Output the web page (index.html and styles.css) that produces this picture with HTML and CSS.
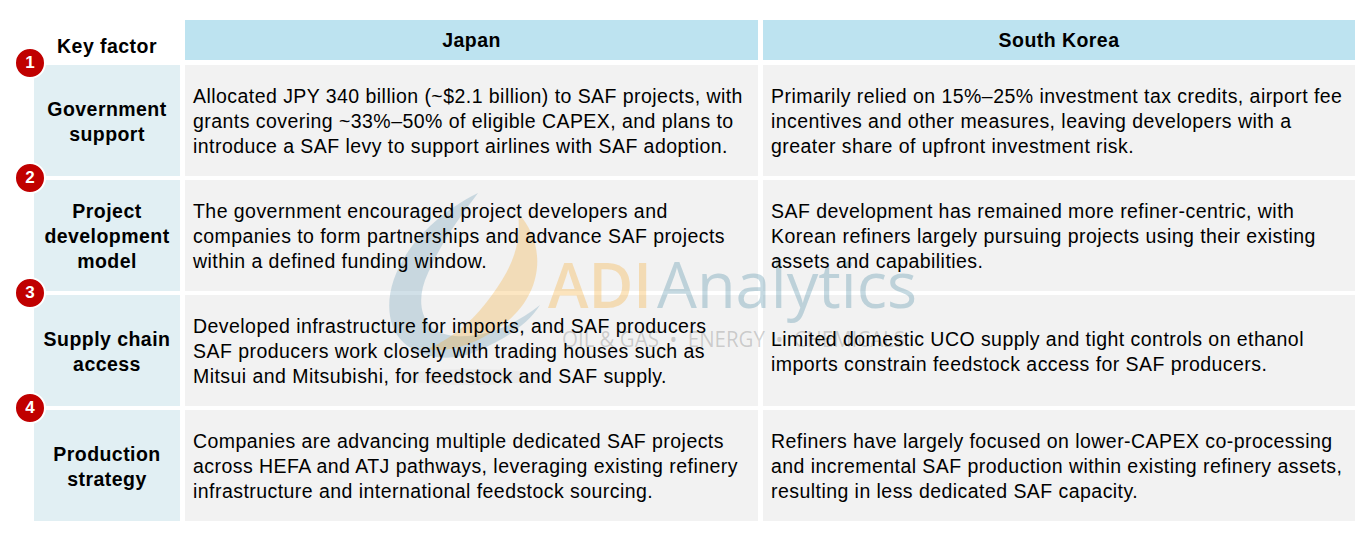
FILE: index.html
```html
<!DOCTYPE html>
<html lang="en">
<head>
<meta charset="utf-8">
<title>Key factor comparison: Japan vs South Korea</title>
<link rel="stylesheet" href="styles.css">
</head>
<body>
<div class="page">
  <div class="table">
    <div class="key-head"><span class="txt">Key factor</span></div>
    <div class="head"><span class="txt">Japan</span></div>
    <div class="head"><span class="txt">South Korea</span></div>

    <div class="key"><span class="num">1</span><span class="txt">Government<br>support</span></div>
    <div class="cell"><p class="txt">Allocated JPY 340 billion (~$2.1 billion) to SAF projects, with<br>grants covering ~33%–50% of eligible CAPEX, and plans to<br>introduce a SAF levy to support airlines with SAF adoption.</p></div>
    <div class="cell"><p class="txt">Primarily relied on 15%–25% investment tax credits, airport fee<br>incentives and other measures, leaving developers with a<br>greater share of upfront investment risk.</p></div>

    <div class="key"><span class="num">2</span><span class="txt">Project<br>development<br>model</span></div>
    <div class="cell"><p class="txt">The government encouraged project developers and<br>companies to form partnerships and advance SAF projects<br>within a defined funding window.</p></div>
    <div class="cell"><p class="txt">SAF development has remained more refiner-centric, with<br>Korean refiners largely pursuing projects using their existing<br>assets and capabilities.</p></div>

    <div class="key"><span class="num">3</span><span class="txt">Supply chain<br>access</span></div>
    <div class="cell"><p class="txt">Developed infrastructure for imports, and SAF producers<br>SAF producers work closely with trading houses such as<br>Mitsui and Mitsubishi, for feedstock and SAF supply.</p></div>
    <div class="cell"><p class="txt">Limited domestic UCO supply and tight controls on ethanol<br>imports constrain feedstock access for SAF producers.</p></div>

    <div class="key"><span class="num">4</span><span class="txt">Production<br>strategy</span></div>
    <div class="cell"><p class="txt">Companies are advancing multiple dedicated SAF projects<br>across HEFA and ATJ pathways, leveraging existing refinery<br>infrastructure and international feedstock sourcing.</p></div>
    <div class="cell"><p class="txt">Refiners have largely focused on lower-CAPEX co-processing<br>and incremental SAF production within existing refinery assets,<br>resulting in less dedicated SAF capacity.</p></div>
  </div>

  <svg class="watermark" width="560" height="220" viewBox="0 0 560 220" aria-hidden="true">
    <ellipse cx="95" cy="192" rx="70" ry="8" fill="#000" fill-opacity="0.03"/>
    <path d="M103,8 C38,40 2,100 18,142 C30,172 72,180 102,166 C132,153 152,140 165,120 C140,140 110,153 80,151 C48,149 38,120 53,88 C68,54 88,28 103,8 Z" fill="#6f9fb8" fill-opacity="0.32"/>
    <path d="M143,28 C174,62 168,114 122,144 C100,159 74,168 53,164 C82,151 102,131 117,110 C136,84 147,60 143,28 Z" fill="#f5a623" fill-opacity="0.28"/>
    <text x="173" y="123" class="wm-adi" textLength="104" lengthAdjust="spacingAndGlyphs">ADI</text>
    <text x="282" y="123" class="wm-an" textLength="260" lengthAdjust="spacingAndGlyphs">Analytics</text>
    <text x="187" y="162" class="wm-tag" textLength="343" lengthAdjust="spacingAndGlyphs">OIL &amp; GAS  •  ENERGY  •  CHEMICALS</text>
  </svg>
</div>
</body>
</html>
```
FILE: styles.css
```css
html, body {
  margin: 0;
  padding: 0;
  background: #ffffff;
}

body {
  font-family: "Liberation Sans", Arial, sans-serif;
  color: #000000;
  font-size: 19.5px;
  letter-spacing: 0.45px;
}

.page {
  position: relative;
  width: 1372px;
  height: 535px;
  padding: 20px 0 0 34px;
  box-sizing: border-box;
}

.table {
  display: grid;
  grid-template-columns: 146px 573px 592px;
  grid-template-rows: 41px repeat(4, 111px);
  column-gap: 5px;
  row-gap: 4px;
}

.txt {
  position: relative;
  z-index: 2;
}

.key-head {
  text-align: center;
  font-weight: bold;
  line-height: 22px;
  padding-top: 15px;
}

.head {
  height: 40px;
  background: #bde3f0;
  display: flex;
  align-items: center;
  justify-content: center;
  font-weight: bold;
  line-height: 22px;
}

.key {
  position: relative;
  background: #e1eff3;
  display: flex;
  align-items: center;
  justify-content: center;
  text-align: center;
  font-weight: bold;
  line-height: 25px;
  padding-top: 2px;
  box-sizing: border-box;
}

.cell {
  background: #f2f2f2;
  display: flex;
  align-items: center;
  padding: 2px 0 0 8px;
  box-sizing: border-box;
}

.cell p {
  margin: 0;
  line-height: 25px;
  white-space: nowrap;
}

.num {
  position: absolute;
  left: -20px;
  top: -18px;
  z-index: 3;
  width: 28px;
  height: 28px;
  border: 2px solid #ffffff;
  border-radius: 50%;
  background: #c00000;
  color: #ffffff;
  font-size: 17px;
  font-weight: bold;
  letter-spacing: 0;
  line-height: 28px;
  text-align: center;
}

.watermark {
  position: absolute;
  left: 375px;
  top: 185px;
  z-index: 1;
  pointer-events: none;
}

.wm-adi {
  font-family: "Open Sans", "Liberation Sans", sans-serif;
  font-size: 64px;
  font-weight: 600;
  fill: #f5a623;
  fill-opacity: 0.3;
  letter-spacing: 0;
}

.wm-an {
  font-family: "Open Sans", "Liberation Sans", sans-serif;
  font-size: 64px;
  font-weight: 400;
  fill: #4f8ba6;
  fill-opacity: 0.32;
  letter-spacing: 0;
}

.wm-tag {
  font-family: "Open Sans", "Liberation Sans", sans-serif;
  font-size: 21px;
  font-weight: 400;
  fill: #777777;
  fill-opacity: 0.32;
  letter-spacing: 0;
  white-space: pre;
}
```
